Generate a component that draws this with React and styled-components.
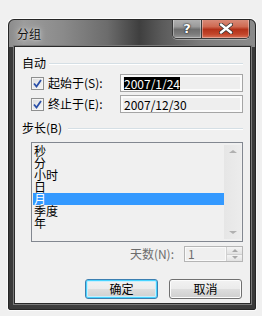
import React from "react";
import styled, { createGlobalStyle } from "styled-components";

const Global = createGlobalStyle`
  html, body { margin: 0; padding: 0; background: #f0f0f0; }
  body { font-family: "Noto Sans CJK SC", "Liberation Sans", sans-serif; font-size: 12px; color: #000; }
`;

const Page = styled.div`
  width: 262px;
  height: 316px;
  padding: 19px 0 0 8px;
  box-sizing: border-box;
  overflow: hidden;
`;

const Window = styled.div`
  width: 248px;
  height: 291px;
  box-sizing: border-box;
  border: 1px solid #262626;
  border-radius: 6px 6px 2px 2px;
  box-shadow: 0 0 0 1px rgba(255,255,255,0.7);
  background: linear-gradient(90deg, #3a3a3a 0%, #444 50%, #3a3a3a 100%);
  display: flex;
  flex-direction: column;
  overflow: hidden;
`;

const TitleBar = styled.div`
  height: 27px;
  flex: none;
  display: flex;
  align-items: flex-start;
  justify-content: space-between;
  background: linear-gradient(90deg, #8c8c8c 0%, #9c9c9c 6%, #8a8a8a 22%, #6c6c6c 40%, #3f3f3f 53%, #5a5a5a 62%, #7c7c7c 78%, #8a8a8a 100%);
  border-radius: 5px 5px 0 0;
`;

const Title = styled.span`
  margin: 7px 0 0 8px;
  font-size: 12px;
  line-height: 14px;
  color: #111;
  text-shadow: 0 0 6px rgba(255,255,255,0.8), 0 0 2px rgba(255,255,255,0.6);
`;

const Caption = styled.div`
  display: flex;
  margin: -1px 5px 0 0;
  border: 1px solid #3a3a3a;
  border-top: none;
  border-radius: 0 0 5px 5px;
  overflow: hidden;
  box-shadow: 0 1px 0 rgba(255,255,255,0.35);
`;

const CapBtn = styled.div`
  width: ${p => p.$w}px;
  height: 19px;
  display: flex;
  align-items: center;
  justify-content: center;
  color: #fff;
  font-family: "DejaVu Sans", sans-serif;
  font-weight: bold;
  font-size: 13px;
  text-shadow: 0 0 2px #222, 0 0 1px #000;
  box-shadow: inset 0 0 0 1px rgba(255,255,255,0.35);
  background: ${p => p.$close
    ? "linear-gradient(180deg, #d98f7d 0%, #cf6a52 40%, #b3321a 55%, #c2452a 80%, #d8735a 100%)"
    : "linear-gradient(180deg, #b4b4b4 0%, #9a9a9a 40%, #6e6e6e 55%, #7c7c7c 80%, #9a9a9a 100%)"};
  & + & { border-left: 1px solid #3a3a3a; }
`;

const Client = styled.div`
  margin: 0 5px 0 6px;
  width: 235px;
  height: 256px;
  flex: none;
  box-sizing: border-box;
  background: #f0f0f0;
  box-shadow: 0 0 0 1px #2a2a2a, 0 0 0 2px #7a7a7a;
  padding: 7px 7px 0 7px;
  display: flex;
  flex-direction: column;
`;

const GroupHead = styled.div`
  display: flex;
  align-items: center;
  height: 14px;
  margin-top: ${p => p.$mt || 0}px;
  line-height: 14px;
  &::after {
    content: "";
    flex: 1;
    height: 1px;
    background: #d5dfe5;
    margin-left: ${p => p.$gap || 3}px;
    box-shadow: 0 1px 0 #fff;
  }
`;

const Row = styled.div`
  display: flex;
  align-items: center;
  height: 18px;
  margin: ${p => p.$mt}px 0 0 9px;
`;

const Check = styled.div`
  width: 13px;
  height: 13px;
  box-sizing: border-box;
  border: 1px solid #8e8f8f;
  background: linear-gradient(135deg, #dcdcdc 0%, #f6f6f6 100%);
  box-shadow: inset 0 0 0 1px #f4f4f4;
  display: flex;
  align-items: center;
  justify-content: center;
  flex: none;
`;

const Label = styled.span`
  width: ${p => p.$w}px;
  margin-left: 4px;
  line-height: 14px;
  white-space: nowrap;
  color: ${p => (p.$dim ? "#6d6d6d" : "#000")};
`;

const TextBox = styled.div`
  width: 123px;
  height: 18px;
  box-sizing: border-box;
  border: 1px solid #a5a5a5;
  box-shadow: inset 0 0 0 2px #fbfbfb;
  background: #eeeeee;
  padding: 0 3px;
  display: flex;
  align-items: center;
  font-family: "Noto Sans CJK SC", "Liberation Sans", sans-serif;
  font-size: 12px;
  line-height: 13px;
`;

const Sel = styled.span`
  background: #000;
  color: #fff;
`;

const ListBox = styled.div`
  margin: 7px 0 0 9px;
  width: 212px;
  height: 100px;
  box-sizing: border-box;
  border: 1px solid #828790;
  background: #f0f0f0;
  display: flex;
`;

const Items = styled.div`
  flex: 1;
  padding: 2px 0 0 1px;
  display: flex;
  flex-direction: column;
`;

const Item = styled.div`
  height: 12px;
  line-height: 12px;
  padding-left: 1px;
  white-space: nowrap;
  background: ${p => (p.$sel ? "#3399ff" : "transparent")};
  color: ${p => (p.$sel ? "#fff" : "#000")};
`;

const ScrollBar = styled.div`
  width: 17px;
  margin: 2px 1px 2px 0;
  background: linear-gradient(90deg, #e6e6e6, #ececec);
  display: flex;
  flex-direction: column;
  justify-content: space-between;
  align-items: center;
  padding: 5px 0;
  box-sizing: border-box;
`;

const Arrow = styled.div`
  width: 0;
  height: 0;
  border-left: 4px solid transparent;
  border-right: 4px solid transparent;
  ${p => (p.$down ? "border-top: 3px solid #b0b0b0;" : "border-bottom: 3px solid #b0b0b0;")}
`;

const SpinRow = styled.div`
  display: flex;
  justify-content: flex-end;
  align-items: center;
  margin-top: 4px;
  height: 16px;
  padding-right: 0;
`;

const Spin = styled.div`
  width: 59px;
  height: 16px;
  margin-left: 10px;
  box-sizing: border-box;
  border: 1px solid #b5b5b5;
  background: #efefef;
  display: flex;
`;

const SpinVal = styled.div`
  flex: 1;
  padding-left: 3px;
  line-height: 14px;
  color: #6d6d6d;
  box-shadow: inset 0 0 0 1px #fafafa;
`;

const SpinBtns = styled.div`
  width: 15px;
  display: flex;
  flex-direction: column;
  border-left: 1px solid #d0d0d0;
`;

const SpinBtn = styled.div`
  flex: 1;
  display: flex;
  align-items: center;
  justify-content: center;
  background: linear-gradient(180deg, #f4f4f4, #e2e2e2);
  & + & { border-top: 1px solid #d0d0d0; }
`;

const SmallArrow = styled.div`
  width: 0;
  height: 0;
  border-left: 3px solid transparent;
  border-right: 3px solid transparent;
  ${p => (p.$down ? "border-top: 3px solid #a8a8a8;" : "border-bottom: 3px solid #a8a8a8;")}
`;

const Buttons = styled.div`
  display: flex;
  justify-content: flex-end;
  gap: 11px;
  margin-top: 17px;
  padding-right: 1px;
`;

const Button = styled.div`
  width: 73px;
  height: 20px;
  box-sizing: border-box;
  border: 1px solid ${p => (p.$def ? "#3c7fb1" : "#707070")};
  border-radius: 3px;
  background: linear-gradient(180deg, #f2f2f2 0%, #ebebeb 48%, #dddddd 52%, #cfcfcf 100%);
  box-shadow: ${p => (p.$def ? "inset 0 0 0 1px #48d4ff, inset 0 0 0 2px #c9eefc" : "inset 0 0 0 1px #fcfcfc")};
  display: flex;
  align-items: center;
  justify-content: center;
  line-height: 14px;
`;

const CheckMark = () => (
  <svg width="9" height="9" viewBox="0 0 9 9">
    <path d="M1 4.5 L3.5 7.5 L8 1" fill="none" stroke="#2a4fa8" strokeWidth="1.8" />
  </svg>
);

const items = ["秒", "分", "小时", "日", "月", "季度", "年"];

export default function App() {
  return (
    <>
      <Global />
      <Page>
        <Window>
          <TitleBar>
            <Title>分组</Title>
            <Caption>
              <CapBtn $w={28}>?</CapBtn>
              <CapBtn $w={47} $close>
                <svg width="14" height="11" viewBox="0 0 14 11">
                  <path d="M2 1.5 L12 9.5 M12 1.5 L2 9.5" stroke="#333" strokeWidth="4" strokeLinecap="round" />
                  <path d="M2 1.5 L12 9.5 M12 1.5 L2 9.5" stroke="#fff" strokeWidth="2.4" strokeLinecap="round" />
                </svg>
              </CapBtn>
            </Caption>
          </TitleBar>
          <Client>
            <GroupHead $mt={2} $gap={3}>自动</GroupHead>
            <Row $mt={4}>
              <Check><CheckMark /></Check>
              <Label $w={72}>起始于(S):</Label>
              <TextBox><Sel>2007/1/24</Sel></TextBox>
            </Row>
            <Row $mt={3}>
              <Check><CheckMark /></Check>
              <Label $w={72}>终止于(E):</Label>
              <TextBox>2007/12/30</TextBox>
            </Row>
            <GroupHead $mt={8} $gap={6}>步长(B)</GroupHead>
            <ListBox>
              <Items>
                {items.map(t => (
                  <Item key={t} $sel={t === "月"}>{t}</Item>
                ))}
              </Items>
              <ScrollBar>
                <Arrow />
                <Arrow $down />
              </ScrollBar>
            </ListBox>
            <SpinRow>
              <Label $dim>天数(N):</Label>
              <Spin>
                <SpinVal>1</SpinVal>
                <SpinBtns>
                  <SpinBtn><SmallArrow /></SpinBtn>
                  <SpinBtn><SmallArrow $down /></SpinBtn>
                </SpinBtns>
              </Spin>
            </SpinRow>
            <Buttons>
              <Button $def>确定</Button>
              <Button>取消</Button>
            </Buttons>
          </Client>
        </Window>
      </Page>
    </>
  );
}
